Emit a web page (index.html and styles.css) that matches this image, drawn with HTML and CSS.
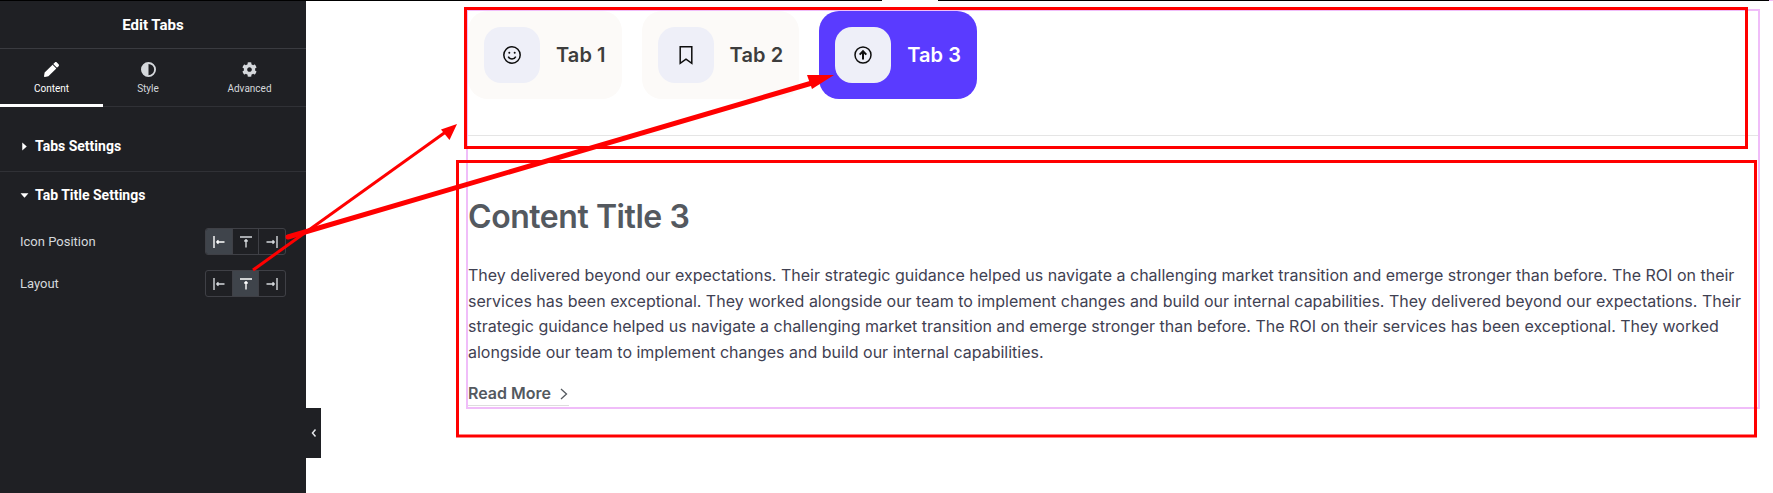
FILE: index.html
```html
<!DOCTYPE html>
<html lang="en">
<head>
<meta charset="utf-8">
<title>Edit Tabs</title>
<link rel="stylesheet" href="styles.css">
</head>
<body>
<div class="topline"><span class="seg-a"></span><span class="seg-gap"></span><span class="seg-b"></span><span class="seg-pink"></span></div>
<div class="app">
  <aside class="sidebar">
    <header class="side-head">Edit Tabs</header>
    <nav class="side-tabs">
      <div class="side-tab active">
        <svg class="tab-ico" viewBox="0 0 512 512"><path fill="currentColor" d="M497.9 142.1l-46.1 46.1c-4.7 4.7-12.3 4.7-17 0l-111-111c-4.7-4.7-4.7-12.3 0-17l46.1-46.1c18.7-18.7 49.1-18.7 67.9 0l60.1 60.1c18.8 18.7 18.8 49.1 0 67.9zM284.2 99.8L21.6 362.4.4 483.9c-2.9 16.4 11.4 30.6 27.8 27.8l121.5-21.3 262.6-262.6c4.7-4.7 4.7-12.3 0-17l-111-111c-4.8-4.7-12.4-4.7-17.1 0z"/></svg>
        <span>Content</span>
      </div>
      <div class="side-tab">
        <svg class="tab-ico" viewBox="0 0 16 16"><circle cx="8" cy="8" r="7" fill="none" stroke="currentColor" stroke-width="2"/><path fill="currentColor" d="M8 1a7 7 0 0 0 0 14z"/></svg>
        <span>Style</span>
      </div>
      <div class="side-tab">
        <svg class="tab-ico" viewBox="0 0 512 512"><path fill="currentColor" d="M487.4 315.7l-42.6-24.6c4.3-23.2 4.3-47 0-70.2l42.6-24.6c4.9-2.8 7.1-8.6 5.5-14-11.1-35.6-30-67.8-54.7-94.6-3.8-4.1-10-5.1-14.8-2.3L380.8 110c-17.9-15.4-38.5-27.3-60.8-35.1V25.8c0-5.6-3.9-10.5-9.4-11.7-36.7-8.2-74.3-7.8-109.2 0-5.5 1.2-9.4 6.1-9.4 11.7V75c-22.2 7.9-42.8 19.8-60.8 35.1L88.7 85.5c-4.9-2.8-11-1.9-14.8 2.3-24.7 26.7-43.6 58.9-54.7 94.6-1.7 5.4.6 11.2 5.5 14L67.3 221c-4.3 23.2-4.3 47 0 70.2l-42.6 24.6c-4.9 2.8-7.1 8.6-5.5 14 11.1 35.6 30 67.8 54.7 94.6 3.8 4.1 10 5.1 14.8 2.3l42.6-24.6c17.9 15.4 38.5 27.3 60.8 35.1v49.2c0 5.6 3.9 10.5 9.4 11.7 36.7 8.2 74.3 7.8 109.2 0 5.5-1.2 9.4-6.1 9.4-11.7v-49.2c22.2-7.9 42.8-19.8 60.8-35.1l42.6 24.6c4.9 2.8 11 1.9 14.8-2.3 24.7-26.7 43.6-58.9 54.7-94.6 1.5-5.5-.7-11.3-5.6-14.1zM256 336c-44.1 0-80-35.9-80-80s35.9-80 80-80 80 35.9 80 80-35.9 80-80 80z"/></svg>
        <span>Advanced</span>
      </div>
    </nav>
    <section class="panel panel-closed">
      <h3 class="panel-title"><svg class="caret" viewBox="0 0 8 8"><path fill="currentColor" d="M2 0.5 6 4 2 7.5z"/></svg>Tabs Settings</h3>
    </section>
    <section class="panel panel-open">
      <h3 class="panel-title"><svg class="caret" viewBox="0 0 8 8"><path fill="currentColor" d="M0.5 2h7L4 6z"/></svg>Tab Title Settings</h3>
      <div class="control">
        <span class="control-label">Icon Position</span>
        <div class="choices">
          <div class="choice on"><svg viewBox="0 0 14 14"><path d="M2 1v12M4.5 7h8M4.5 7l2-1.6M4.5 7l2 1.6"/></svg></div>
          <div class="choice"><svg viewBox="0 0 14 14"><path d="M1 2h12M7 4.5v8M7 4.5 5.4 6.5M7 4.5l1.6 2"/></svg></div>
          <div class="choice"><svg viewBox="0 0 14 14"><path d="M12 1v12M1.5 7h8M9.5 7l-2-1.6M9.5 7l-2 1.6"/></svg></div>
        </div>
      </div>
      <div class="control">
        <span class="control-label">Layout</span>
        <div class="choices">
          <div class="choice"><svg viewBox="0 0 14 14"><path d="M2 1v12M4.5 7h8M4.5 7l2-1.6M4.5 7l2 1.6"/></svg></div>
          <div class="choice on"><svg viewBox="0 0 14 14"><path d="M1 2h12M7 4.5v8M7 4.5 5.4 6.5M7 4.5l1.6 2"/></svg></div>
          <div class="choice"><svg viewBox="0 0 14 14"><path d="M12 1v12M1.5 7h8M9.5 7l-2-1.6M9.5 7l-2 1.6"/></svg></div>
        </div>
      </div>
    </section>
  </aside>
  <button class="collapse" type="button" aria-label="Collapse"><svg viewBox="0 0 6 10"><path d="M4.5 1.5 1.5 5l3 3.5"/></svg></button>
  <main class="canvas">
    <div class="widget">
      <div class="tabs">
        <div class="tab">
          <span class="tab-icon"><svg viewBox="0 0 20 20"><circle cx="10" cy="10" r="8.2"/><path d="M6.2 11.6c.9 1.7 2.2 2.5 3.8 2.5s2.9-.8 3.8-2.5"/><circle class="dot" cx="7.3" cy="7.8" r="1"/><circle class="dot" cx="12.7" cy="7.8" r="1"/></svg></span>
          <span class="tab-name">Tab 1</span>
        </div>
        <div class="tab">
          <span class="tab-icon"><svg viewBox="0 0 20 20"><path d="M4.2 1.7h11.6v16.6L10 14.2l-5.8 4.1z"/></svg></span>
          <span class="tab-name">Tab 2</span>
        </div>
        <div class="tab current">
          <span class="tab-icon"><svg viewBox="0 0 20 20"><circle cx="10" cy="10" r="8"/><path class="heavy" d="M10 14.5V6.5M6.7 9.6 10 6.2l3.3 3.4"/></svg></span>
          <span class="tab-name">Tab 3</span>
        </div>
      </div>
      <article class="content">
        <h2 class="content-title">Content Title 3</h2>
        <p class="content-text">They delivered beyond our expectations. Their strategic guidance helped us navigate a challenging market transition and emerge stronger than before. The ROI on their services has been exceptional. They worked alongside our team to implement changes and build our internal capabilities. They delivered beyond our expectations. Their strategic guidance helped us navigate a challenging market transition and emerge stronger than before. The ROI on their services has been exceptional. They worked alongside our team to implement changes and build our internal capabilities.</p>
        <a class="read-more" href="#">Read More<svg viewBox="0 0 10 14"><path d="M2 2l5.5 5L2 12"/></svg></a>
      </article>
    </div>
  </main>
</div>
<svg class="annotations" viewBox="0 0 1773 493" aria-hidden="true">
  <rect class="box" x="465.5" y="8.5" width="1281" height="139"/>
  <rect class="box" x="457.5" y="161.5" width="1298" height="274.5"/>
  <path class="thin" d="M253 270 447 131"/>
  <path class="fill" d="M457 124 441 129.5 449.5 140z"/>
  <path class="thick" d="M288 237 812 83"/>
  <path class="fill" d="M834 75 807 75 812 89z"/>
</svg>
</body>
</html>
```
FILE: styles.css
```css
* { box-sizing: border-box; }
html, body { margin: 0; padding: 0; }
body {
  width: 1773px;
  height: 493px;
  overflow: hidden;
  background: #fff;
  position: relative;
  font-family: "Inter", "Liberation Sans", sans-serif;
}
.topline { display: flex; height: 1px; }
.seg-a { width: 882px; background: #000; }
.seg-gap { width: 56px; background: #fff; }
.seg-b { width: 831px; background: #000; }
.seg-pink { flex: 1; background: #f0bdf9; }
.app { display: flex; height: 492px; position: relative; }
.sidebar {
  width: 306px;
  flex: none;
  background: #1f2024;
  color: #fff;
  font-family: "Roboto", "Liberation Sans", sans-serif;
}
.side-head {
  height: 48px;
  padding-top: 1px;
  display: flex;
  align-items: center;
  justify-content: center;
  font-size: 15px;
  font-weight: 700;
  border-bottom: 1px solid #3a3b40;
}
.side-tabs {
  display: grid;
  grid-template-columns: 103px 90px 113px;
  height: 58px;
  border-bottom: 1px solid #303136;
}
.side-tab {
  display: flex;
  flex-direction: column;
  align-items: center;
  padding-top: 13px;
  font-size: 10px;
  color: #d5d8dc;
  position: relative;
}
.side-tab span { margin-top: 5px; line-height: 13px; }
.side-tab.active { color: #fff; }
.side-tab.active::after {
  content: "";
  position: absolute;
  left: 0;
  right: 0;
  bottom: -1px;
  height: 3px;
  background: #fff;
}
.tab-ico { width: 15px; height: 15px; display: block; }
.panel { border-bottom: 1px solid #303136; padding: 0 20px; }
.panel-open { border-bottom: 0; }
.panel-closed { height: 65px; padding-top: 31px; }
.panel-open { padding-top: 15px; }
.panel-title {
  margin: 0;
  display: flex;
  align-items: center;
  font-size: 14px;
  font-weight: 700;
  line-height: 16px;
  color: #fff;
}
.caret { width: 9px; height: 9px; margin-right: 6px; flex: none; }
.panel-open .panel-title { margin-bottom: 25px; }
.control {
  display: flex;
  align-items: center;
  justify-content: space-between;
  margin-bottom: 15px;
}
.control-label { font-size: 13px; color: #d5d8dc; }
.choices {
  display: flex;
  width: 81px;
  height: 27px;
  border: 1px solid #3f4046;
  border-radius: 3px;
  overflow: hidden;
}
.choice {
  flex: 1;
  display: flex;
  align-items: center;
  justify-content: center;
}
.choice + .choice { border-left: 1px solid #3f4046; }
.choice.on { background: #3f444b; }
.choice svg {
  width: 14px;
  height: 14px;
  fill: none;
  stroke: #d5d8dc;
  stroke-width: 1.4;
}
.choice.on svg { stroke: #fff; }
.collapse {
  position: absolute;
  left: 306px;
  top: 407px;
  width: 15px;
  height: 50px;
  padding: 0;
  border: 0;
  background: #1f2024;
  display: flex;
  align-items: center;
  justify-content: center;
}
.collapse svg {
  width: 6px;
  height: 10px;
  fill: none;
  stroke: #e4e6ea;
  stroke-width: 1.5;
}
.canvas { flex: 1; padding: 10px 15px 0 162px; }
.widget { outline: 2px solid #f0bdf9; height: 396px; }
.tabs {
  display: flex;
  gap: 20px;
  height: 125px;
  border-bottom: 1px solid #e5e5e5;
  align-items: flex-start;
}
.tab {
  display: flex;
  align-items: center;
  gap: 16px;
  height: 88px;
  padding: 16px;
  border-radius: 20px;
  background: #fcfaf8;
  color: #3d3d3d;
}
.tab.current { background: #5a3bff; color: #fff; }
.tab-icon {
  width: 56px;
  height: 56px;
  border-radius: 17px;
  background: #eeeff8;
  display: flex;
  align-items: center;
  justify-content: center;
}
.tab-icon svg {
  width: 20px;
  height: 20px;
  fill: none;
  stroke: #0d0d0d;
  stroke-width: 1.5;
}
.tab-icon .dot { fill: #0d0d0d; stroke: none; }
.tab-icon .heavy { stroke-width: 2; }
.tab-name { font-size: 20px; font-weight: 600; line-height: 24px; letter-spacing: .08px; }
.content { padding-top: 62px; }
.content-title {
  margin: 0 0 27px;
  font-size: 32px;
  font-weight: 600;
  line-height: 38px;
  letter-spacing: -.45px;
  color: #54595f;
}
.content-text {
  margin: 0 0 18px;
  font-size: 16px;
  line-height: 25.6px;
  color: #3f4152;
}
.read-more {
  display: inline-flex;
  align-items: center;
  gap: 8px;
  font-size: 16px;
  font-weight: 600;
  line-height: 19px;
  padding-bottom: 2px;
  color: #54595f;
  text-decoration: none;
  border-bottom: 1px solid #dddddd;
}
.read-more svg {
  width: 10px;
  height: 14px;
  fill: none;
  stroke: #54595f;
  stroke-width: 1.3;
}
.annotations {
  position: absolute;
  left: 0;
  top: 0;
  width: 1773px;
  height: 493px;
  pointer-events: none;
}
.annotations .box { fill: none; stroke: #ff0000; stroke-width: 3; }
.annotations .thin { fill: none; stroke: #ff0000; stroke-width: 3; }
.annotations .thick { fill: none; stroke: #ff0000; stroke-width: 5; stroke-linecap: round; }
.annotations .fill { fill: #ff0000; }
```
